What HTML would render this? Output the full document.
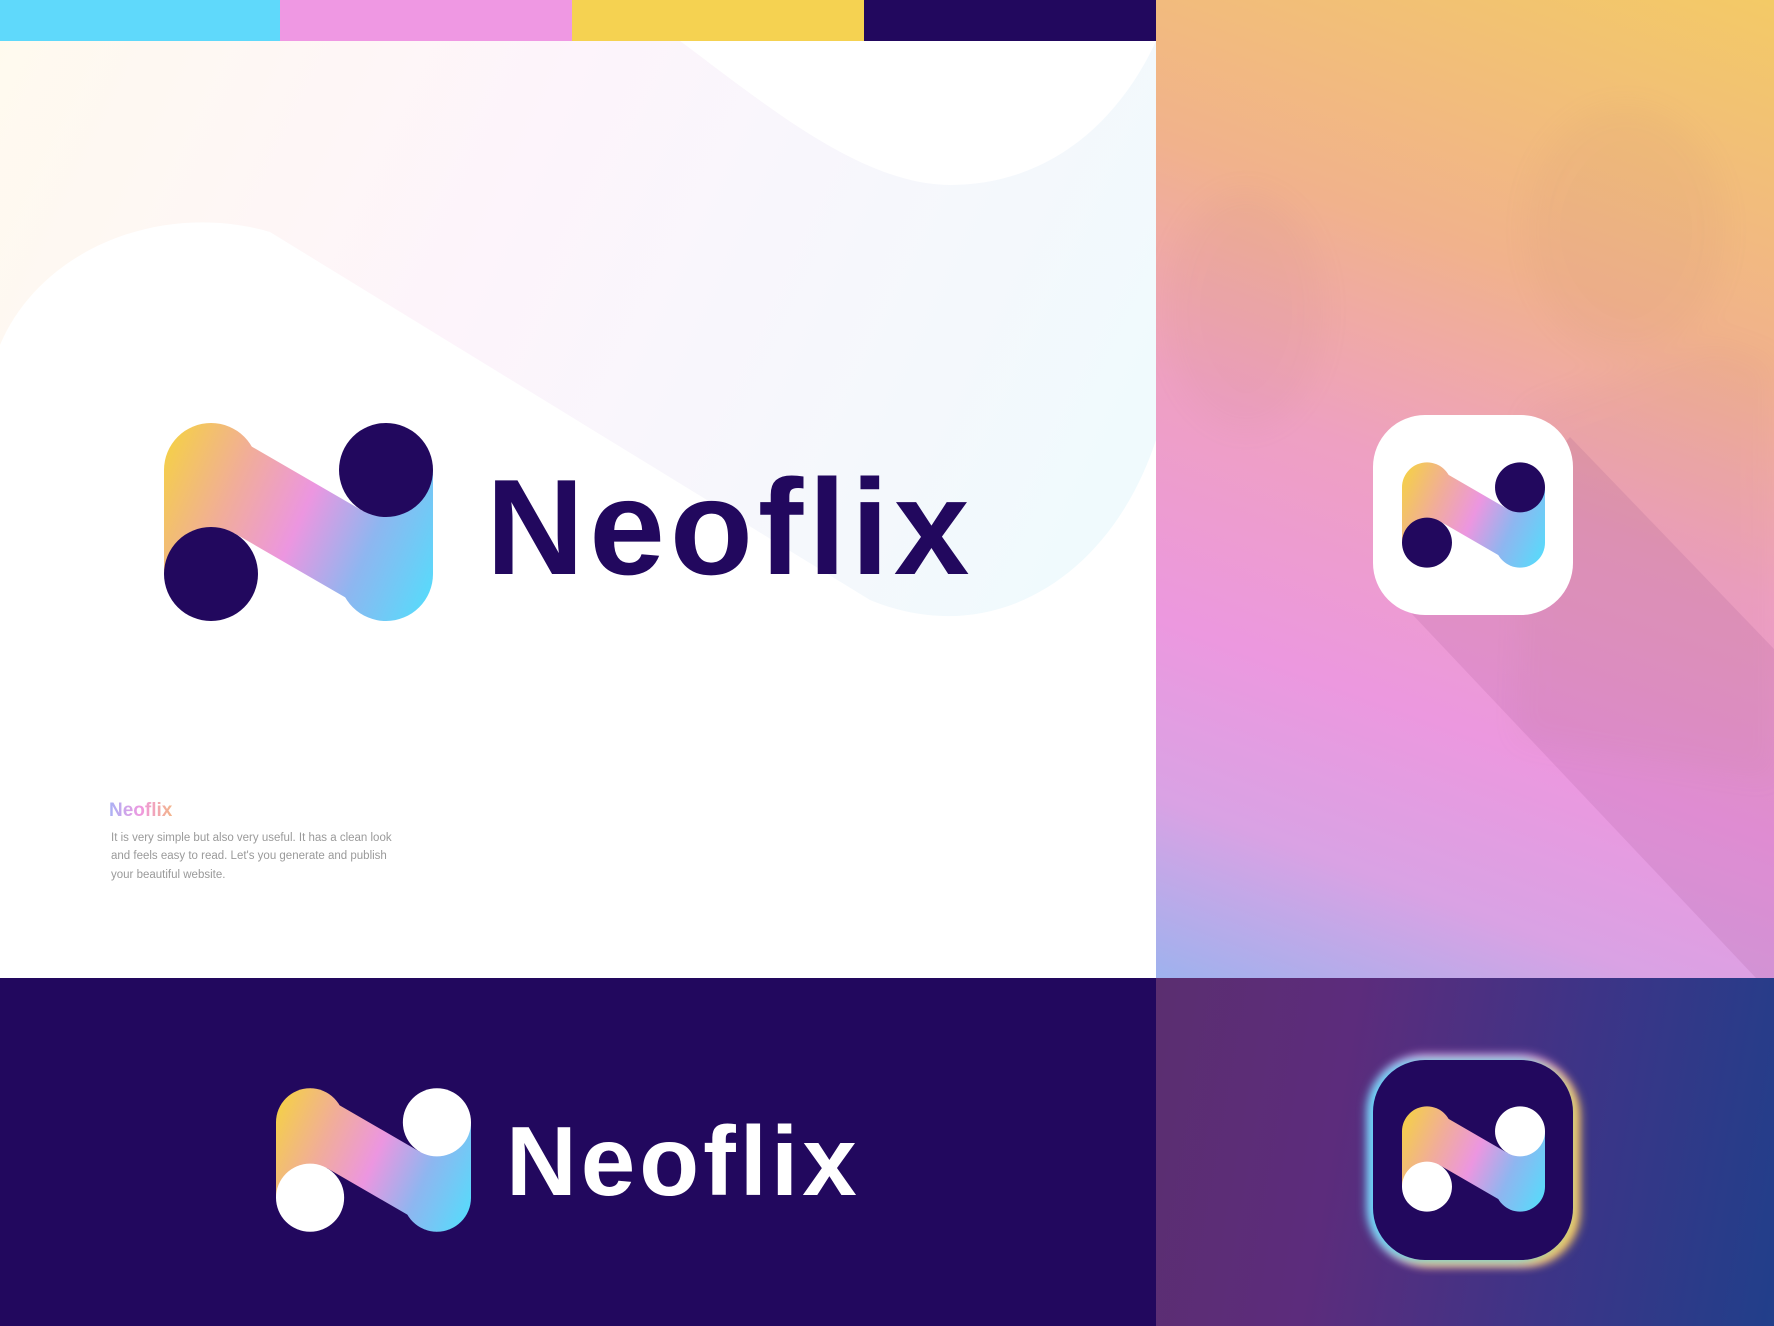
<!DOCTYPE html>
<html><head><meta charset="utf-8"><style>
*{margin:0;padding:0;box-sizing:border-box}
body{width:1774px;height:1326px;position:relative;overflow:hidden;background:#fff;font-family:"Liberation Sans",sans-serif}
.abs{position:absolute}
</style></head><body>
<svg width="0" height="0" style="position:absolute">
<defs>
<linearGradient id="g" gradientUnits="userSpaceOnUse" x1="0" y1="40" x2="269" y2="160">
<stop offset="0" stop-color="#f4cd4e"/><stop offset="0.25" stop-color="#f1ad99"/><stop offset="0.5" stop-color="#ec96e0"/><stop offset="0.75" stop-color="#8eb6f0"/><stop offset="1" stop-color="#5bd8fa"/>
</linearGradient>
<symbol id="logo" viewBox="0 0 269 198">
<g fill="url(#g)">
<circle cx="47" cy="47" r="47"/><circle cx="222" cy="151" r="47"/>
<polygon points="0,47 47,0 199,88 222,47 269,47 269,151 222,198 70,110 47,151 0,151"/>
</g>
<circle cx="222" cy="47" r="47" fill="currentColor"/>
<circle cx="47" cy="151" r="47" fill="currentColor"/>
</symbol>
</defs>
</svg>

<svg class="abs" style="left:0;top:0" width="1156" height="978">
<defs><linearGradient id="bg" x1="0" y1="0" x2="1" y2="0.4">
<stop offset="0" stop-color="#fffaee"/><stop offset="0.45" stop-color="#fdf4fb"/><stop offset="1" stop-color="#f0fafd"/></linearGradient></defs>
<rect width="1156" height="978" fill="url(#bg)"/>
<path d="M0,345 C40,250 160,200 270,232 L870,600 C990,650 1110,580 1156,440 L1156,978 L0,978 Z" fill="#fff"/>
<path d="M680,41 C760,100 860,185 950,185 C1050,185 1120,120 1156,41 Z" fill="#fff"/>
</svg>

<div class="abs" style="left:0;top:0;width:280px;height:41px;background:#5fd9fb"></div>
<div class="abs" style="left:280px;top:0;width:292px;height:41px;background:#ef98e3"></div>
<div class="abs" style="left:572px;top:0;width:292px;height:41px;background:#f5d251"></div>
<div class="abs" style="left:864px;top:0;width:292px;height:41px;background:#22085e"></div>

<svg class="abs" style="left:164px;top:423px;color:#22085e" width="269" height="198"><use href="#logo"/></svg>
<div class="abs" style="left:486px;top:452px;font-size:136px;font-weight:bold;color:#22085e;letter-spacing:5px;line-height:150px">Neoflix</div>

<div class="abs" style="left:109px;top:800px;font-size:19px;font-weight:bold;background:linear-gradient(90deg,#a9b2f5,#ef98e0,#f3b48a);-webkit-background-clip:text;background-clip:text;color:transparent">Neoflix</div>
<div class="abs" style="left:111px;top:829px;font-size:11.5px;line-height:18.3px;color:#9a9a9a;width:320px">It is very simple but also very useful. It has a clean look<br>and feels easy to read. Let's you generate and publish<br>your beautiful website.</div>

<div class="abs" style="left:1156px;top:0;width:618px;height:978px;background:linear-gradient(200deg,#f3ca66 0%,#f1b28c 30%,#eea0c2 50%,#ec98df 70%,#d9a2e4 85%,#9eb2ee 100%)"></div>
<svg class="abs" style="left:1156px;top:0" width="618" height="978">
<defs><filter id="bl"><feGaussianBlur stdDeviation="14"/></filter></defs>
<g fill="#a8706a" opacity="0.06" filter="url(#bl)">
<ellipse cx="90" cy="310" rx="80" ry="120"/>
<ellipse cx="470" cy="230" rx="100" ry="125"/>
<path d="M370,410 L560,340 L618,360 L618,780 L360,740 Z"/>
</g>
<polygon points="414,437 618,649 618,978 600,978 256,614" fill="#8a3a7a" opacity="0.13"/>
</svg>
<div class="abs" style="left:1373px;top:415px;width:200px;height:200px;border-radius:52px;background:#fff"></div>
<svg class="abs" style="left:1402px;top:462px;color:#22085e" width="143" height="106"><use href="#logo"/></svg>

<div class="abs" style="left:0;top:978px;width:1156px;height:348px;background:#22085e"></div>
<svg class="abs" style="left:276px;top:1088px;color:#fff" width="195" height="144"><use href="#logo"/></svg>
<div class="abs" style="left:506px;top:1106px;font-size:98px;font-weight:bold;color:#fff;letter-spacing:4px;line-height:110px">Neoflix</div>

<div class="abs" style="left:1156px;top:978px;width:618px;height:348px;background:linear-gradient(100deg,#5b2e70 0%,#5c2c7c 30%,#3d3487 65%,#213f8a 100%)"></div>
<div class="abs" style="left:1373px;top:1060px;width:200px;height:200px;border-radius:52px;background:#22085e;box-shadow:-5px 0 10px 1px #5fd8fb,6px 4px 10px 1px #f5cd55,0 -5px 10px #ef98e0,0 5px 10px #ef98e0"></div>
<svg class="abs" style="left:1402px;top:1106px;color:#fff" width="143" height="106"><use href="#logo"/></svg>
</body></html>
